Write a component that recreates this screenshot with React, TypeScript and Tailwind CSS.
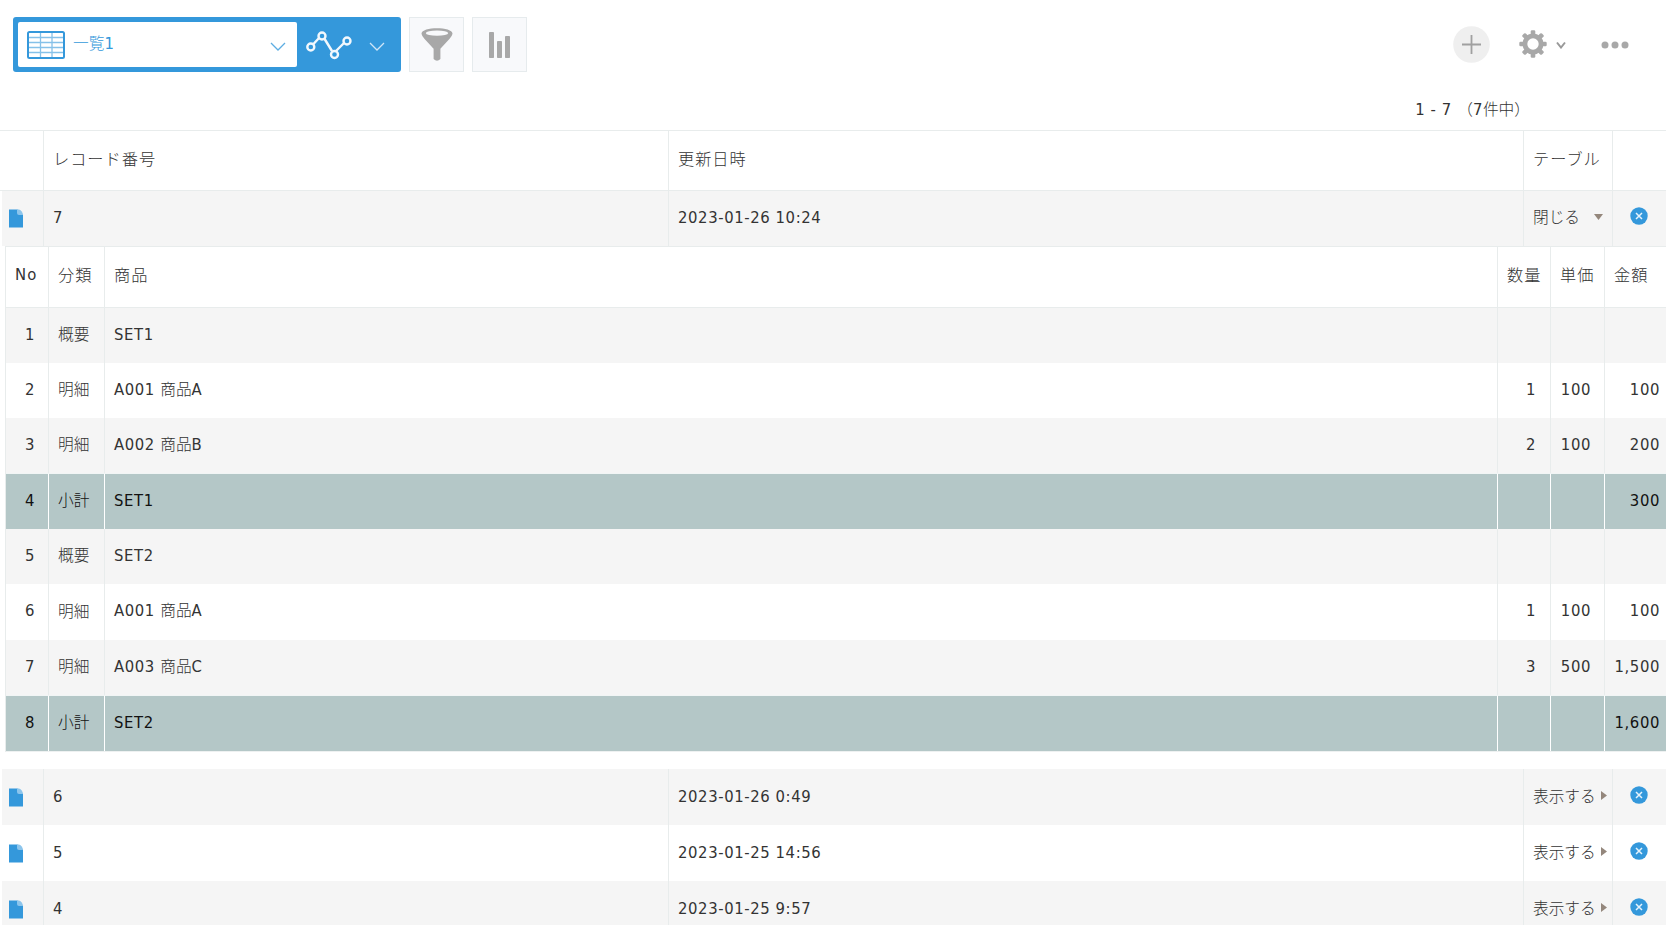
import React from 'react';

const latinFont = "font-['DejaVu_Sans_Condensed','DejaVu_Sans',sans-serif] text-[16.5px]";

function T({ children, head = false }: { children: string; head?: boolean }) {
  const parts = children.split(/([\x20-\x7e]+)/).filter(Boolean);
  return (
    <span className="whitespace-pre">
      {parts.map((p, i) => (
        <span
          key={i}
          className={
            /^[\x20-\x7e]/.test(p)
              ? `${latinFont} ${head ? 'tracking-[1.2px]' : 'tracking-[0.6px]'}`
              : head
                ? "font-['Noto_Sans_CJK_JP',sans-serif] text-[16.2px] tracking-[1px] font-light"
                : "font-['Noto_Sans_CJK_JP',sans-serif] text-[15.7px] font-light"
          }
        >
          {p}
        </span>
      ))}
    </span>
  );
}

const line = 'border-[#e8ecec]';

function FileIcon() {
  return (
    <svg width="14" height="19" viewBox="0 0 14 19">
      <path d="M0 0.5H8.500L14 6V18.5H0Z" fill="#3498db" />
      <path d="M8 0.5H10Q13.500 1.500 14 6H10Q8 6 8 4Z" fill="#8cc5ec" />
    </svg>
  );
}

function CloseIcon() {
  return (
    <svg width="18" height="18" viewBox="0 0 18 18">
      <circle cx="9" cy="9" r="8.7" fill="#3498db" />
      <path d="M6 6L12 12M12 6L6 12" stroke="#e6f3fc" strokeWidth="1.5" />
    </svg>
  );
}

function RecordRow({ no, date, open = false, shade = false }: { no: string; date: string; open?: boolean; shade?: boolean }) {
  return (
    <div className={`ml-[2px] grid shrink-0 grid-cols-[42px_625px_855px_89px_1fr] ${open ? 'h-[55px]' : 'h-14'} ${shade ? 'bg-[#f5f5f5]' : 'bg-white'}`}>
      <div className={`flex items-center border-r pl-[7px] ${line}`}><FileIcon /></div>
      <div className={`flex items-center border-r pb-[2px] pl-[9px] ${line}`}><T>{no}</T></div>
      <div className={`flex items-center border-r pb-[2px] pl-[9px] ${line}`}><T>{date}</T></div>
      <div className={`flex items-center border-r pb-[3px] pl-[9px] ${line}`}>
        <T>{open ? '閉じる' : '表示する'}</T>
        {open ? (
          <svg className="ml-[14px]" width="9" height="6"><path d="M0 0H9L4.500 6Z" fill="#94877c" /></svg>
        ) : (
          <svg className="ml-[5px]" width="6" height="9"><path d="M0 0V9L6 4.500Z" fill="#94877c" /></svg>
        )}
      </div>
      <div className="flex items-center pb-[5px] pl-[17px]"><CloseIcon /></div>
    </div>
  );
}

type Item = [string, string, string, string, string, string];
const items: Item[] = [
  ['1', '概要', 'SET1', '', '', ''],
  ['2', '明細', 'A001 商品A', '1', '100', '100'],
  ['3', '明細', 'A002 商品B', '2', '100', '200'],
  ['4', '小計', 'SET1', '', '', '300'],
  ['5', '概要', 'SET2', '', '', ''],
  ['6', '明細', 'A001 商品A', '1', '100', '100'],
  ['7', '明細', 'A003 商品C', '3', '500', '1,500'],
  ['8', '小計', 'SET2', '', '', '1,600'],
];

const subCols = 'grid shrink-0 grid-cols-[43px_56px_1393px_53px_54px_1fr]';
const align = ['justify-end pr-[13px]', 'pl-[9px]', 'pl-[9px]', 'justify-end pr-[14px]', 'justify-end pr-[13px]', 'justify-end pr-[6px]'];

function SubTable() {
  return (
    <div className={`ml-[5px] flex shrink-0 flex-col border-t border-l ${line}`}>
      <div className={`${subCols} h-[61px] border-b ${line}`}>
        {['No', '分類', '商品', '数量', '単価', '金額'].map((t, i) => (
          <div key={t} className={`flex items-center pb-[5px] pl-[9px] ${i < 5 ? 'border-r' : ''} ${line}`}><T head>{t}</T></div>
        ))}
      </div>
      {items.map((row) => {
        const total = row[1] === '小計';
        const grey = Number(row[0]) % 2 === 1;
        const height = total || row[0] === '6' ? 'h-14' : 'h-[55px]';
        return (
          <div
            key={row[0]}
            className={`${subCols} ${height} ${total ? 'border-t border-[#f1f5f5] bg-[#b4c7c7] text-[#111]' : grey ? 'bg-[#f5f5f5]' : 'bg-white'}`}
          >
            {row.map((t, i) => (
              <div
                key={i}
                className={`flex items-center pb-[3px] ${align[i]} ${i < 5 ? 'border-r' : ''} ${total ? 'border-white' : line}`}
              >
                <T>{t}</T>
              </div>
            ))}
          </div>
        );
      })}
      <div className="h-px bg-[#eef1f1]" />
    </div>
  );
}

function Toolbar() {
  return (
    <div className="flex h-[73px] shrink-0 items-start pt-[17px] pl-[13px]">
      <div className="flex h-[55px] w-[388px] items-center rounded-[3px] bg-[#3498db] pl-[5px]">
        <div className="flex h-[45px] w-[279px] items-center rounded-[2px] bg-white pl-[9px] text-[#3498db]">
          <svg width="38" height="28" viewBox="0 0 38 28">
            <rect x="1" y="1" width="36" height="26" rx="1.500" fill="white" stroke="#3498db" strokeWidth="2" />
            <path d="M2 6.500H36M2 11.500H36M2 16.500H36M2 21.500H36M13.500 2V26M25 2V26" stroke="#85c1e9" strokeWidth="1.300" />
          </svg>
          <div className="ml-2 pb-[2px]"><T>一覧1</T></div>
          <svg className="mt-1 ml-auto mr-[11px]" width="16" height="10" fill="none"><path d="M1 1L8 8L15 1" stroke="#5dade2" strokeWidth="1.300" /></svg>
        </div>
        <svg className="ml-[9px]" width="46" height="30" viewBox="0 0 46 30" fill="none" stroke="#f2f8fd" strokeWidth="2.400">
          <path d="M7 14.500L13 8M18 8L26 21M30 21L38 13" />
          <circle cx="4.800" cy="17" r="3.500" /><circle cx="16" cy="6" r="3.500" /><circle cx="28.500" cy="24.500" r="3.500" /><circle cx="41" cy="11" r="3.500" />
        </svg>
        <svg className="mt-1 ml-[17px]" width="16" height="10" fill="none"><path d="M1 1L8 8L15 1" stroke="#cfe6f7" strokeWidth="1.300" /></svg>
      </div>
      <div className="ml-[8px] flex h-[55px] w-[55px] items-center justify-center border border-[#e6ebed] bg-[#f8f9fb]">
        <svg width="32" height="33" viewBox="0 0 32 34">
          <path d="M0 6C0-1.500 32-1.500 32 6Q31.500 8.500 29 11L19.500 21.500V32Q16 35.500 12.500 32V21.500L3 11Q0.500 8.500 0 6Z" fill="#a8a8a8" />
          <ellipse cx="16" cy="5.300" rx="11.500" ry="2.700" fill="#f8f9fb" />
        </svg>
      </div>
      <div className="ml-[8px] flex h-[55px] w-[55px] items-center justify-center border border-[#e6ebed] bg-[#f8f9fb]">
        <svg width="21" height="26" viewBox="0 0 21 26" fill="#a8a8a8"><rect width="5" height="26" rx="0.800" /><rect x="8" y="9" width="5" height="17" rx="0.800" /><rect x="16" y="4" width="5" height="22" rx="0.800" /></svg>
      </div>
      <div className="mt-[9px] ml-auto flex items-center pr-[37px]">
        <svg width="37" height="37" viewBox="0 0 37 37"><circle cx="18.500" cy="18.500" r="18.300" fill="#efefef" /><path d="M9 18.500H28M18.500 9V28" stroke="#a0a0a0" strokeWidth="1.800" /></svg>
        <svg className="mb-[2px] ml-[29px]" width="28" height="28" viewBox="-14 -14 28 28" fill="#a8a8a8">
          {[0, 45, 90, 135].map((a) => <rect key={a} x="-2.300" y="-13.700" width="4.600" height="27.400" rx="1.300" transform={`rotate(${a})`} />)}
          <circle r="10.500" /><circle r="5.700" fill="white" />
        </svg>
        <svg className="ml-[9px]" width="10" height="8" fill="none"><path d="M1 1.500L5 6.500L9 1.500" stroke="#999" strokeWidth="2" /></svg>
        <svg className="ml-[35px]" width="28" height="8" fill="#a8a8a8"><circle cx="4" cy="4" r="3.500" /><circle cx="14" cy="4" r="3.500" /><circle cx="24" cy="4" r="3.500" /></svg>
      </div>
    </div>
  );
}

export default function App() {
  return (
    <div className="flex h-[925px] w-full flex-col overflow-hidden bg-white leading-6 text-[#333]">
      <Toolbar />
      <div className="flex h-[57px] shrink-0 justify-end pt-[24px] pr-[136px]"><T>1 - 7 （7件中）</T></div>
      <div className={`grid h-[61px] shrink-0 grid-cols-[44px_625px_855px_89px_1fr] border-y ${line}`}>
        <div className={`border-r ${line}`} />
        {['レコード番号', '更新日時', 'テーブル'].map((t) => (
          <div key={t} className={`flex items-center border-r pb-[5px] pl-[9px] ${line}`}><T head>{t}</T></div>
        ))}
      </div>
      <RecordRow no="7" date="2023-01-26 10:24" open shade />
      <SubTable />
      <div className="h-[17px] shrink-0" />
      <RecordRow no="6" date="2023-01-26 0:49" shade />
      <RecordRow no="5" date="2023-01-25 14:56" />
      <RecordRow no="4" date="2023-01-25 9:57" shade />
    </div>
  );
}
